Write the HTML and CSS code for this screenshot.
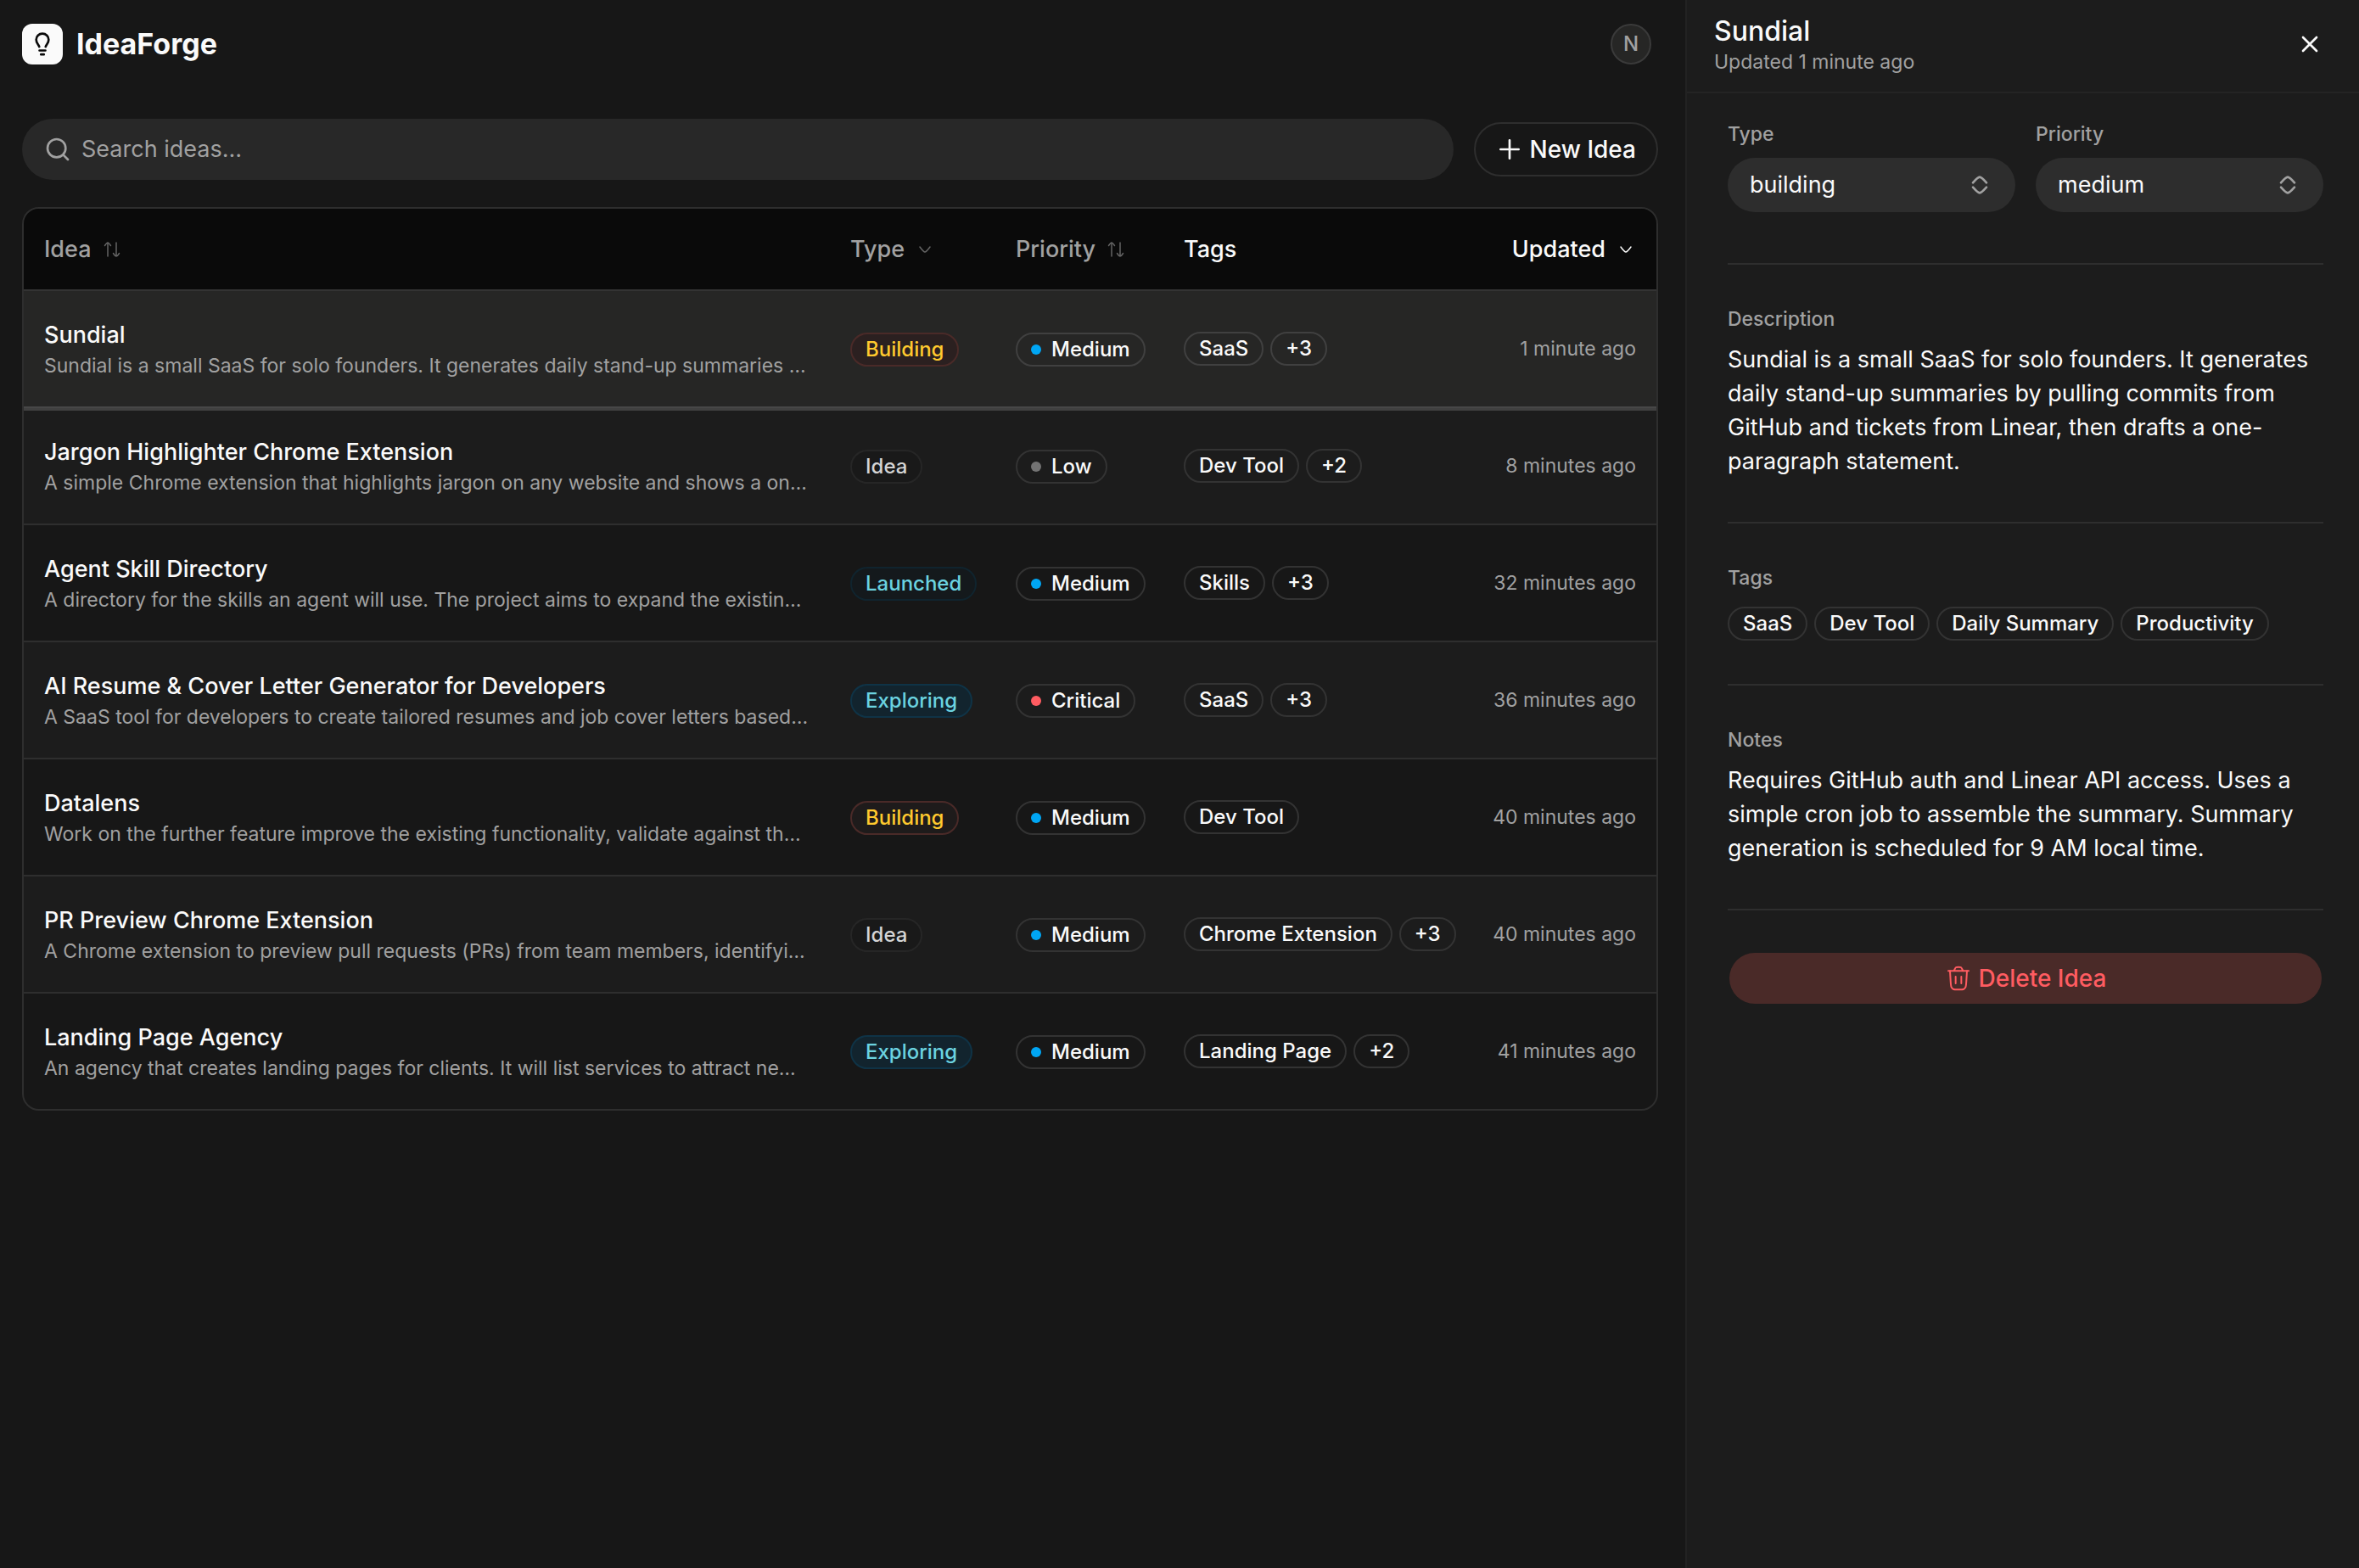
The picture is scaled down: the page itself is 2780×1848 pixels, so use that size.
FILE: index.html
```
<!DOCTYPE html>
<html lang="en">
<head>
    <meta charset="UTF-8">
    <meta name="viewport" content="width=device-width, initial-scale=1.0">
    <title>IdeaForge</title>
    <link rel="stylesheet" href="styles.css">
</head>
<body>

    <!-- Shared icons -->
    <svg class="icon-defs" aria-hidden="true">
        <symbol id="icon-bulb" viewBox="0 0 24 24">
            <path d="M9.2 14.3C8.6 12.2 6.5 11.2 6.500 8.100C6.500 5.100 8.900 2.750 12 2.750C15.100 2.750 17.500 5.100 17.500 8.100C17.500 11.200 15.400 12.200 14.800 14.300" />
            <path d="M9.400 17.600H14.600M10.700 21.100H13.300" />
        </symbol>
        <symbol id="icon-search" viewBox="0 0 24 24">
            <circle cx="11" cy="11" r="8" />
            <path d="M17 17L21 21" />
        </symbol>
        <symbol id="icon-plus" viewBox="0 0 24 24">
            <path d="M12 4V20M20 12H4" />
        </symbol>
        <symbol id="icon-sort" viewBox="0 0 24 24">
            <path d="M7 4V20M3.500 7.500C4.500 6 6 4 7 4C8 4 9.500 6 10.500 7.500" />
            <path d="M17 20V4M13.500 16.500C14.500 18 16 20 17 20C18 20 19.500 18 20.500 16.500" />
        </symbol>
        <symbol id="icon-down" viewBox="0 0 24 24">
            <path d="M18 9C18 9 13.600 15 12 15C10.400 15 6 9 6 9" />
        </symbol>
        <symbol id="icon-unfold" viewBox="0 0 24 24">
            <path d="M18 14C18 14 13.581 19 12 19C10.419 19 6 14 6 14" />
            <path d="M18 10C18 10 13.581 5 12 5C10.419 5 6 10 6 10" />
        </symbol>
        <symbol id="icon-close" viewBox="0 0 24 24">
            <path d="M18 6L6 18M6 6L18 18" />
        </symbol>
        <symbol id="icon-trash" viewBox="0 0 24 24">
            <path d="M19.500 5.500L18.880 15.525C18.722 18.086 18.643 19.367 18.001 20.288C17.683 20.743 17.275 21.127 16.801 21.416C15.842 22 14.559 22 11.993 22C9.423 22 8.139 22 7.179 21.415C6.705 21.126 6.296 20.741 5.979 20.285C5.337 19.363 5.260 18.080 5.105 15.515L4.500 5.500" />
            <path d="M3 5.500H21M16.056 5.500L15.373 4.092C14.920 3.156 14.693 2.688 14.302 2.397C13.735 2 13.028 2 11.992 2C10.930 2 10.222 2 9.660 2.407C9.270 2.710 9.048 3.190 8.604 4.150L8 5.500M9.500 16.500V10.500M14.500 16.500V10.500" />
        </symbol>
    </svg>

    <div class="app">
        <main class="main">
            <header class="topbar">
                <div class="brand">
                    <span class="brand-mark"><svg class="icon icon-bold"><use href="#icon-bulb" /></svg></span>
                    <span class="brand-name">IdeaForge</span>
                </div>
                <button class="avatar" type="button" aria-label="Account">N</button>
            </header>

            <div class="toolbar">
                <label class="search">
                    <svg class="icon icon-bold"><use href="#icon-search" /></svg>
                    <input class="search-input" type="text" placeholder="Search ideas…" aria-label="Search ideas">
                </label>
                <button class="new-idea" type="button">
                    <svg class="icon icon-bold"><use href="#icon-plus" /></svg>
                    New Idea
                </button>
            </div>

            <div class="table-card">
                <table class="ideas">
                    <colgroup>
                        <col>
                        <col class="col-type">
                        <col class="col-priority">
                        <col class="col-tags">
                        <col class="col-updated">
                    </colgroup>
                    <thead>
                        <tr>
                            <th><button class="sort" type="button">Idea <svg class="icon"><use href="#icon-sort" /></svg></button></th>
                            <th><button class="sort" type="button">Type <svg class="icon"><use href="#icon-down" /></svg></button></th>
                            <th><button class="sort" type="button">Priority <svg class="icon"><use href="#icon-sort" /></svg></button></th>
                            <th>Tags</th>
                            <th class="updated"><button class="sort active" type="button">Updated <svg class="icon"><use href="#icon-down" /></svg></button></th>
                        </tr>
                    </thead>
                    <tbody>
                        <tr class="selected">
                            <td>
                                <div class="idea-title">Sundial</div>
                                <div class="idea-desc">Sundial is a small SaaS for solo founders. It generates daily stand-up summaries …</div>
                            </td>
                            <td><span class="badge building">Building</span></td>
                            <td><span class="badge"><i class="dot medium"></i>Medium</span></td>
                            <td><div class="tags"><span class="badge">SaaS</span><span class="badge">+3</span></div></td>
                            <td class="updated">1 minute ago</td>
                        </tr>
                        <tr>
                            <td>
                                <div class="idea-title">Jargon Highlighter Chrome Extension</div>
                                <div class="idea-desc">A simple Chrome extension that highlights jargon on any website and shows a on…</div>
                            </td>
                            <td><span class="badge idea">Idea</span></td>
                            <td><span class="badge"><i class="dot low"></i>Low</span></td>
                            <td><div class="tags"><span class="badge">Dev Tool</span><span class="badge">+2</span></div></td>
                            <td class="updated">8 minutes ago</td>
                        </tr>
                        <tr>
                            <td>
                                <div class="idea-title">Agent Skill Directory</div>
                                <div class="idea-desc">A directory for the skills an agent will use. The project aims to expand the existin…</div>
                            </td>
                            <td><span class="badge launched">Launched</span></td>
                            <td><span class="badge"><i class="dot medium"></i>Medium</span></td>
                            <td><div class="tags"><span class="badge">Skills</span><span class="badge">+3</span></div></td>
                            <td class="updated">32 minutes ago</td>
                        </tr>
                        <tr>
                            <td>
                                <div class="idea-title">AI Resume &amp; Cover Letter Generator for Developers</div>
                                <div class="idea-desc">A SaaS tool for developers to create tailored resumes and job cover letters based…</div>
                            </td>
                            <td><span class="badge exploring">Exploring</span></td>
                            <td><span class="badge"><i class="dot critical"></i>Critical</span></td>
                            <td><div class="tags"><span class="badge">SaaS</span><span class="badge">+3</span></div></td>
                            <td class="updated">36 minutes ago</td>
                        </tr>
                        <tr>
                            <td>
                                <div class="idea-title">Datalens</div>
                                <div class="idea-desc">Work on the further feature improve the existing functionality, validate against th…</div>
                            </td>
                            <td><span class="badge building">Building</span></td>
                            <td><span class="badge"><i class="dot medium"></i>Medium</span></td>
                            <td><div class="tags"><span class="badge">Dev Tool</span></div></td>
                            <td class="updated">40 minutes ago</td>
                        </tr>
                        <tr>
                            <td>
                                <div class="idea-title">PR Preview Chrome Extension</div>
                                <div class="idea-desc">A Chrome extension to preview pull requests (PRs) from team members, identifyi…</div>
                            </td>
                            <td><span class="badge idea">Idea</span></td>
                            <td><span class="badge"><i class="dot medium"></i>Medium</span></td>
                            <td><div class="tags"><span class="badge">Chrome Extension</span><span class="badge">+3</span></div></td>
                            <td class="updated">40 minutes ago</td>
                        </tr>
                        <tr>
                            <td>
                                <div class="idea-title">Landing Page Agency</div>
                                <div class="idea-desc">An agency that creates landing pages for clients. It will list services to attract ne…</div>
                            </td>
                            <td><span class="badge exploring">Exploring</span></td>
                            <td><span class="badge"><i class="dot medium"></i>Medium</span></td>
                            <td><div class="tags"><span class="badge">Landing Page</span><span class="badge">+2</span></div></td>
                            <td class="updated">41 minutes ago</td>
                        </tr>
                    </tbody>
                </table>
            </div>
        </main>

        <aside class="panel">
            <header class="panel-header">
                <div>
                    <h2 class="panel-title">Sundial</h2>
                    <p class="panel-sub">Updated 1 minute ago</p>
                </div>
                <button class="close" type="button" aria-label="Close"><svg class="icon icon-bold"><use href="#icon-close" /></svg></button>
            </header>

            <div class="panel-body">
                <div class="fields">
                    <div class="field">
                        <label class="label" for="type">Type</label>
                        <div class="select-wrap">
                            <select class="select" id="type">
                                <option>building</option>
                                <option>idea</option>
                                <option>exploring</option>
                                <option>launched</option>
                            </select>
                            <svg class="icon"><use href="#icon-unfold" /></svg>
                        </div>
                    </div>
                    <div class="field">
                        <label class="label" for="priority">Priority</label>
                        <div class="select-wrap">
                            <select class="select" id="priority">
                                <option>medium</option>
                                <option>low</option>
                                <option>critical</option>
                            </select>
                            <svg class="icon"><use href="#icon-unfold" /></svg>
                        </div>
                    </div>
                </div>

                <section class="section">
                    <h3 class="label">Description</h3>
                    <p class="text">Sundial is a small SaaS for solo founders. It generates daily stand-up summaries by pulling commits from GitHub and tickets from Linear, then drafts a one-paragraph statement.</p>
                </section>

                <section class="section">
                    <h3 class="label">Tags</h3>
                    <div class="tags panel-tags">
                        <span class="badge">SaaS</span>
                        <span class="badge">Dev Tool</span>
                        <span class="badge">Daily Summary</span>
                        <span class="badge">Productivity</span>
                    </div>
                </section>

                <section class="section">
                    <h3 class="label">Notes</h3>
                    <p class="text">Requires GitHub auth and Linear API access. Uses a simple cron job to assemble the summary. Summary generation is scheduled for 9 AM local time.</p>
                </section>

                <button class="delete" type="button">
                    <svg class="icon"><use href="#icon-trash" /></svg>
                    Delete Idea
                </button>
            </div>
        </aside>
    </div>

</body>
</html>
```

FILE: styles.css
```
/* General */
* {
    box-sizing: border-box;
}

html, body {
    margin: 0;
    padding: 0;
    background: #171717;
    color: #fafafa;
    font-family: Inter, "Liberation Sans", sans-serif;
    font-size: 27px;
    line-height: 40px;
}

h2, h3, p {
    margin: 0;
    font-weight: 400;
}

button, input, select {
    margin: 0;
    padding: 0;
    border: none;
    background: none;
    color: inherit;
    font: inherit;
}

button {
    cursor: pointer;
}

.icon-defs {
    display: none;
}

.icon {
    width: 32px;
    height: 32px;
    flex: none;
    fill: none;
    stroke: currentColor;
    stroke-width: 1.5;
    stroke-linecap: round;
    stroke-linejoin: round;
}

.icon-bold {
    stroke-width: 2;
}

.app {
    display: flex;
    min-height: 100vh;
}

.main {
    flex: 1;
    min-width: 0;
    padding: 0 32px 32px 26px;
}

/* Top bar */
.topbar {
    display: flex;
    align-items: center;
    justify-content: space-between;
    height: 104px;
    padding-right: 8px;
}

.brand {
    display: flex;
    align-items: center;
    gap: 16px;
}

.brand-mark {
    display: flex;
    align-items: center;
    justify-content: center;
    width: 48px;
    height: 48px;
    border-radius: 12px;
    background: #fafafa;
    color: #0a0a0a;
}

.brand-name {
    font-size: 34px;
    font-weight: 700;
}

.avatar {
    width: 48px;
    height: 48px;
    border: 2px solid #3a3a3a;
    border-radius: 50%;
    background: #262625;
    color: #a1a1a1;
    font-size: 24px;
    font-weight: 500;
}

/* Search and new idea */
.toolbar {
    display: flex;
    align-items: center;
    gap: 24px;
    margin: 36px 0 32px;
}

.search {
    display: flex;
    flex: 1;
    align-items: center;
    gap: 12px;
    height: 72px;
    padding: 0 26px;
    border-radius: 36px;
    background: #282828;
    color: #a1a1a1;
}

.search-input {
    flex: 1;
    min-width: 0;
    outline: none;
    color: #fafafa;
}

.search-input::placeholder {
    color: #a1a1a1;
}

.new-idea {
    display: flex;
    align-items: center;
    gap: 8px;
    height: 64px;
    padding: 0 24px;
    border: 2px solid #2e2e2e;
    border-radius: 32px;
    font-size: 28px;
    font-weight: 500;
}

/* Ideas table */
.table-card {
    overflow: hidden;
    border: 2px solid #2e2e2e;
    border-radius: 20px;
}

.ideas {
    width: 100%;
    table-layout: fixed;
    border-collapse: separate;
    border-spacing: 0;
}

.col-type {
    width: 195px;
}

.col-priority {
    width: 198px;
}

.col-tags {
    width: 361px;
}

.col-updated {
    width: 220px;
}

.ideas th {
    height: 97px;
    padding: 0 24px;
    border-bottom: 2px solid #333333;
    background: #0a0a0a;
    font-weight: 500;
    text-align: left;
}

.ideas td {
    height: 138px;
    padding: 0 24px;
    border-bottom: 2px solid #2e2e2e;
    vertical-align: middle;
}

.ideas tbody tr:nth-child(even) {
    background: #1c1c1c;
}

.ideas tbody tr:last-child td {
    height: 136px;
    border-bottom: none;
}

.ideas .selected {
    background: #262625;
}

.ideas .selected td {
    border-bottom-color: #474747;
}

.ideas .selected + tr td {
    box-shadow: inset 0 3px 0 #404040;
}

.ideas .updated {
    text-align: right;
    white-space: nowrap;
}

.ideas td.updated {
    color: #a1a1a1;
    font-size: 23px;
}

.sort {
    display: inline-flex;
    align-items: center;
    gap: 12px;
    color: #a1a1a1;
}

.sort .icon {
    width: 24px;
    height: 24px;
    opacity: 0.6;
}

.sort.active,
.sort.active .icon {
    color: #fafafa;
    opacity: 1;
}

.idea-title,
.idea-desc {
    overflow: hidden;
    text-overflow: ellipsis;
    white-space: nowrap;
}

.idea-title {
    font-weight: 500;
}

.idea-desc {
    color: #a1a1a1;
    font-size: 23px;
    line-height: 32px;
}

/* Badges */
.badge {
    display: inline-flex;
    align-items: center;
    gap: 12px;
    height: 40px;
    padding: 0 16px;
    border: 2px solid #333333;
    border-radius: 20px;
    font-size: 24px;
    font-weight: 500;
    line-height: 36px;
    white-space: nowrap;
    vertical-align: middle;
}

.selected .badge {
    border-color: #404040;
}

.badge.building {
    border-color: #4a2a28;
    background: #1e1b1b;
    color: #ffc92e;
}

.selected .badge.building {
    background: #2b2020;
}

.badge.idea {
    border-color: #262626;
    background: #191919;
    color: #d4d4d4;
}

.badge.launched {
    border-color: #10242e;
    background: #14191c;
    color: #6bd3e0;
}

.badge.exploring {
    border-color: #0f3346;
    background: #12242e;
    color: #6bd3e0;
}

.dot {
    width: 12px;
    height: 12px;
    border-radius: 50%;
}

.medium {
    background: #00a6f4;
}

.low {
    background: #737373;
}

.critical {
    background: #ff5c61;
}

.tags {
    display: flex;
    gap: 8px;
}

/* Detail panel */
.panel {
    flex: none;
    width: 794px;
    border-left: 2px solid #222222;
    background: #1c1c1c;
}

.panel-header {
    display: flex;
    align-items: center;
    justify-content: space-between;
    height: 110px;
    padding: 0 42px 4px 32px;
    border-bottom: 2px solid #242424;
}

.panel-title {
    font-size: 32px;
    font-weight: 500;
    line-height: 42px;
}

.panel-sub {
    color: #a1a1a1;
    font-size: 23px;
    line-height: 30px;
}

.close {
    display: flex;
}

.panel-body {
    padding: 0 42px 48px 48px;
}

.label {
    display: block;
    margin-bottom: 12px;
    color: #a1a1a1;
    font-size: 23px;
    font-weight: 500;
    line-height: 32px;
}

.fields {
    display: flex;
    gap: 24px;
    padding: 32px 0 60px;
    border-bottom: 2px solid #2e2e2e;
}

.field {
    flex: 1;
}

.select-wrap {
    position: relative;
}

.select {
    display: block;
    appearance: none;
    width: 100%;
    height: 64px;
    padding: 0 64px 0 26px;
    border-radius: 32px;
    background: #2d2d2d;
}

/* Arrows sit over the select */
.select-wrap .icon {
    position: absolute;
    top: 16px;
    right: 26px;
    color: #a1a1a1;
    stroke-width: 2;
    pointer-events: none;
}

.section {
    padding: 48px 0 51px;
    border-bottom: 2px solid #2e2e2e;
}

.panel-tags {
    flex-wrap: wrap;
    padding-top: 6px;
}

.delete {
    display: flex;
    align-items: center;
    justify-content: center;
    gap: 8px;
    width: 100%;
    height: 64px;
    margin-top: 48px;
    border: 2px solid transparent;
    border-radius: 32px;
    background: #4a2a28;
    background-clip: padding-box;
    color: #ff5c61;
    font-size: 28px;
    font-weight: 500;
}
```
